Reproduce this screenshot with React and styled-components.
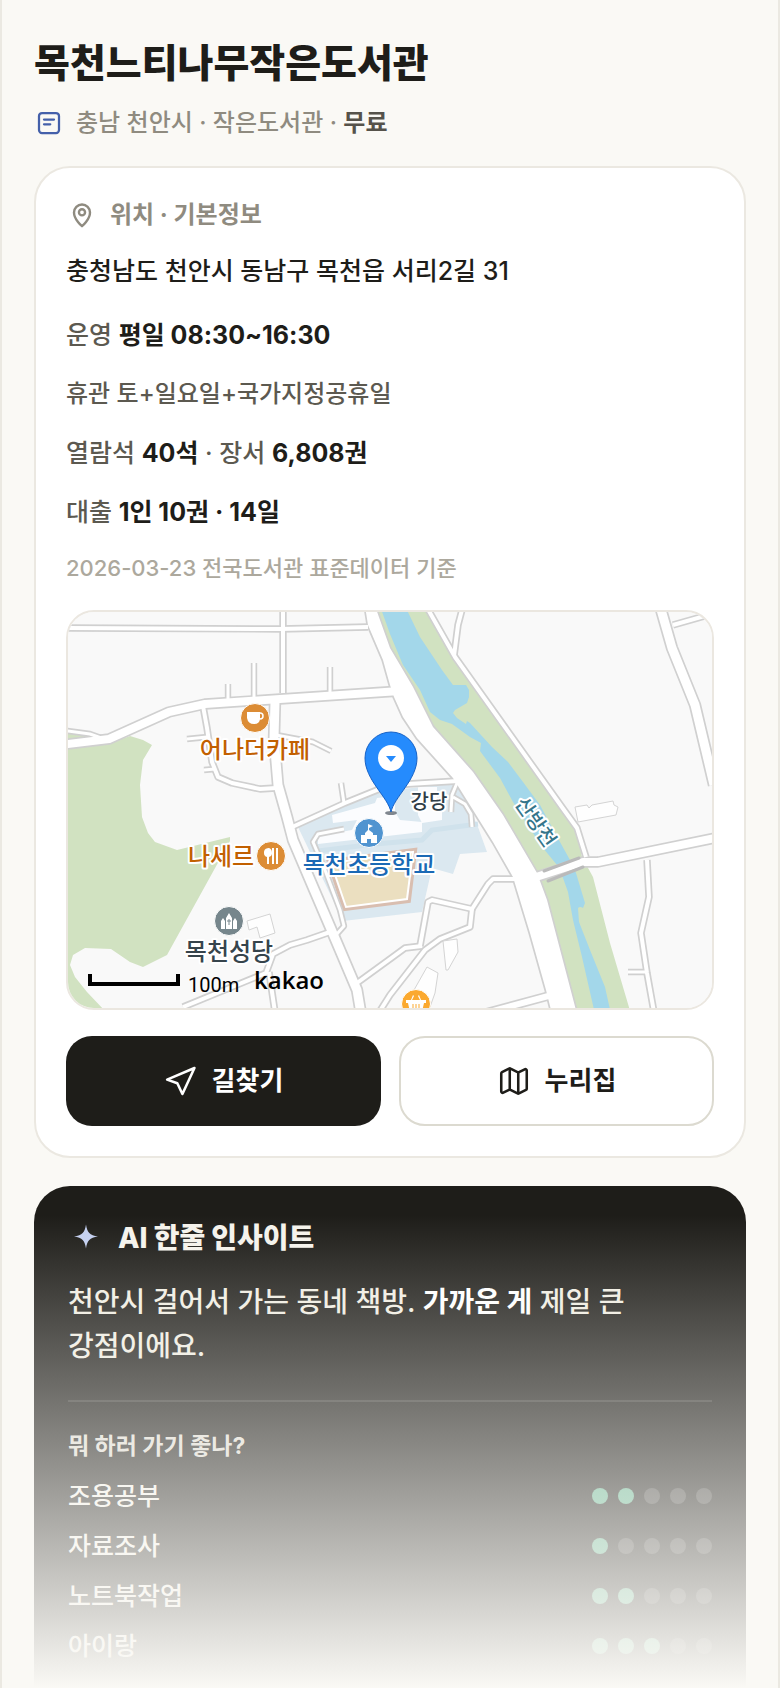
import styled, { createGlobalStyle, css } from "styled-components";
import { Map as MapIcon } from "lucide-react";

const GlobalStyle = createGlobalStyle`
  * {
    box-sizing: border-box;
  }

  body {
    margin: 0;
    background: #faf9f5;
    color: #1e1d19;
    font-family: Inter, "Noto Sans CJK KR", sans-serif;
  }

  h1, h2, h3, p, ul, dl, dd {
    margin: 0;
    padding: 0;
  }
`;

const Shell = styled.main`
  position: relative;
  display: flex;
  flex-direction: column;
  height: 100vh;
  overflow: hidden;
  padding: 36px 32px 0;
  border: 0 solid #ebe9e2;
  border-width: 0 2px;
`;

const Title = styled.h1`
  font-size: 39px;
  font-weight: 800;
  line-height: 54px;
`;

const Meta = styled.p`
  display: flex;
  align-items: center;
  gap: 12px;
  margin-top: 15px;
  font-size: 24px;
  font-weight: 500;
  line-height: 36px;
  color: #8f8b80;

  strong {
    font-weight: 600;
    color: #55524a;
  }
`;

const Card = styled.section`
  flex: none;
  margin-top: 25px;
  padding: 30px;
  border: 2px solid #ebe8e1;
  border-radius: 36px;
  background: #fff;
`;

const CardTitle = styled.h2`
  display: flex;
  align-items: center;
  gap: 12px;
  font-size: 24px;
  font-weight: 700;
  line-height: 34px;
  color: #8f8b80;
`;

const Address = styled.p`
  margin-top: 19px;
  font-size: 25px;
  font-weight: 500;
  line-height: 40px;
`;

const InfoList = styled.div`
  display: grid;
  gap: 23px;
  margin-top: 26px;
`;

const InfoRow = styled.p`
  font-size: ${(p) => (p.$plain ? 24 : 25)}px;
  font-weight: 500;
  line-height: 36px;
  color: #5c5950;

  strong {
    font-weight: 700;
    color: #1e1d19;
  }
`;

const Source = styled.p`
  margin-top: 22px;
  font-size: 22px;
  font-weight: 500;
  line-height: 32px;
  color: #aca89d;
`;

const MapFrame = styled.div`
  height: 400px;
  margin-top: 26px;
  border: 2px solid #ebe7e0;
  border-radius: 28px;
  overflow: hidden;
  background: #f9f9f9;

  svg {
    display: block;
    width: 100%;
    height: 100%;
  }
`;

const Label = styled.text`
  font-family: "Noto Sans CJK KR", sans-serif;
  font-size: ${(p) => (p.$small ? 20 : 24)}px;
  font-weight: 500;
  fill: ${(p) => p.$color};
  stroke: #fff;
  stroke-width: 4px;
  stroke-linejoin: round;
  paint-order: stroke;
  text-anchor: middle;
`;

const ScaleText = styled.text`
  font-family: Roboto, sans-serif;
  font-size: 20px;
`;

const Brand = styled.text`
  font-family: "Open Sans", sans-serif;
  font-size: 24px;
  font-weight: 600;
`;

const Actions = styled.div`
  display: grid;
  grid-template-columns: 1fr 1fr;
  gap: 18px;
  margin-top: 26px;
`;

const Action = styled.a`
  display: flex;
  align-items: center;
  justify-content: center;
  gap: 14px;
  height: 90px;
  border-radius: 26px;
  font-size: 26px;
  font-weight: 700;
  line-height: 34px;
  text-decoration: none;

  ${(p) =>
    p.$primary
      ? css`
          background: #1e1d19;
          color: #fff;
        `
      : css`
          background: #fff;
          color: #1e1d19;
          border: 2px solid #dcdad0;
        `}
`;

const Insight = styled.section`
  flex: 1 0 auto;
  margin-top: 28px;
  padding: 34px 34px 64px;
  border-radius: 36px;
  background: #1e1d19;
  color: #f5f3ec;
`;

const InsightTitle = styled.h2`
  display: flex;
  align-items: center;
  gap: 14px;
  font-size: 28px;
  font-weight: 800;
  line-height: 36px;
`;

const Quote = styled.p`
  margin-top: 24px;
  font-size: 28px;
  font-weight: 500;
  line-height: 44px;
  color: #f0ede2;
  word-break: keep-all;

  strong {
    font-weight: 700;
    color: #fff;
  }
`;

const Divider = styled.hr`
  height: 2px;
  margin: 32px 0 28px;
  border: 0;
  background: rgba(255, 255, 255, 0.12);
`;

const SubTitle = styled.h3`
  font-size: 23px;
  font-weight: 700;
  line-height: 32px;
  color: #dedbd2;
`;

const Scores = styled.dl`
  display: grid;
  gap: 14px;
  margin-top: 16px;
`;

const ScoreRow = styled.div`
  display: flex;
  align-items: center;
  justify-content: space-between;
  font-size: 25px;
  font-weight: 500;
  line-height: 36px;
`;

const Dots = styled.dd`
  display: flex;
  gap: 10px;
`;

const Dot = styled.span`
  width: 16px;
  height: 16px;
  border-radius: 50%;
  background: ${(p) => (p.$on ? "#62b28e" : "rgba(255, 255, 255, 0.18)")};
`;

const Fade = styled.div`
  position: absolute;
  left: 0;
  right: 0;
  bottom: 0;
  height: 28%;
  background: linear-gradient(rgba(250, 249, 245, 0), #faf9f5);
  pointer-events: none;
`;

const strokeProps = {
  fill: "none",
  stroke: "currentColor",
  strokeWidth: 1.8,
  strokeLinecap: "round",
  strokeLinejoin: "round",
  "aria-hidden": true,
};

const NoteIcon = () => (
  <svg width="30" height="30" viewBox="0 0 24 24" {...strokeProps} stroke="#4460aa">
    <rect x="4" y="4" width="16" height="16" rx="2.4" />
    <path d="M8 9.2h8M8 13h5" />
  </svg>
);

const PlaceIcon = () => (
  <svg width="32" height="32" viewBox="0 0 24 24" {...strokeProps}>
    <path d="M12 20.4s-6-5-6-10.3a6 6 0 0 1 12 0c0 5.3-6 10.3-6 10.3z" />
    <circle cx="12" cy="10" r="2.3" />
  </svg>
);

const RouteIcon = () => (
  <svg width="34" height="34" viewBox="0 0 24 24" {...strokeProps}>
    <path d="M21.5 2.8 2.2 11l7.2 2.6L13 21.2z" />
  </svg>
);

const SparkIcon = () => (
  <svg width="36" height="36" viewBox="0 0 24 24" fill="#c3cff0" aria-hidden="true">
    <path d="M12 3c.8 5.200 2.400 7.300 8 8-5.600.7-7.200 2.800-8 8-.8-5.200-2.400-7.300-8-8 5.600-.7 7.200-2.800 8-8z" />
  </svg>
);

// [points, width of the road surface]
const roads = [
  ["60,628 280,629 368,627", 4],
  ["283,606 283,693", 4],
  ["60,745 109,739 169,712 205,704 280,699 400,691", 8],
  ["60,730 90,734 104,739", 3],
  ["228,684 228,702", 3],
  ["254,663 254,700", 3],
  ["330,667 330,697", 3],
  ["203,706 207,728 212,762 218,777 232,783 260,789 276,788", 4],
  ["187,739 207,737", 3],
  ["204,770 215,769", 3],
  ["275,702 274,738 278,785 287,817 293,840 313,887 337,943 357,990 361,1014", 9],
  ["276,735 313,742 331,751", 3],
  ["290,828 345,803 382,788 408,784 458,781", 4],
  ["341,783 344,803", 3],
  ["451,812 452,795 457,783", 3],
  ["453,797 465,804 471,814 472,827", 3],
  ["344,829 318,834 313,842 325,870 340,910 344,926 336,935", 3],
  ["425,604 455,657 564,810 577,828 586,857", 4],
  ["463,606 458,625 454,656", 4],
  ["660,606 672,648 695,705 714,785", 9],
  ["673,625 712,614", 4],
  ["533,878 583,862 598,862 720,837", 8],
  ["647,860 649,897 641,933 647,973 654,1012", 4],
  ["628,972 647,972", 3],
  ["516,879 493,879 488,884 472,909 432,900 428,902 420,946", 4],
  ["472,909 470,927 440,939 425,950 390,995 378,1014", 4],
  ["422,946 405,948 390,959 357,983", 4],
  ["330,932 307,940 290,945 273,954 266,973 183,1007", 4],
  ["269,972 275,1012", 4],
  ["478,1015 552,995", 6],
];

const mainRoad =
  "365,606 368,625 383,660 390,685 394,697 403,717 417,738 453,778 473,810 493,842 513,877 530,933 546,990 552,1014 577,1014 547,900 537,873 503,815 473,772 433,727 413,687 390,648 375,606";

const buildings = [
  "247,921 270,914 275,933 260,938 257,927 249,930",
  "443,941 457,939 458,952 448,970 446,970",
  "427,967 438,973 435,993 430,1007 420,1007 414,990",
  "575,807 587,805 589,808 592,805 613,801 614,805 618,807 616,815 578,822",
];

const markers = [
  { x: 255, y: 718, fill: "#dc8c35" },
  { x: 271, y: 856, fill: "#dc8c35" },
  { x: 229, y: 921, fill: "#76868c" },
  { x: 369, y: 833, fill: "#5094d0" },
  { x: 416, y: 1004, fill: "#fba92f" },
];

const LocationMap = () => (
  <svg
    viewBox="68 612 644 396"
    preserveAspectRatio="xMidYMid slice"
    role="img"
    aria-label="목천느티나무작은도서관 지도"
  >
    <rect x="60" y="600" width="660" height="420" fill="#f9f9f9" />
    <g fill="#d1e2c1">
      <path d="M60 748 110 743 130 736 143 740 152 745 143 760 140 785 142 817 148 833 155 842 177 850 230 837V841L167 955 143 967 130 962 111 949 85 948 73 955 70 965 75 977 87 992 106 1012H60z" />
      <path d="M60 734H90L96 738 60 741z" />
      <path d="M372 606 390 648 413 687 433 727 473 772 503 815 537 873 547 900 577 1014H631L610 943 593 877 582 857 577 833 562 810 455 658 423 606z" />
    </g>
    <path
      fill="#a3d7ea"
      d="M380 606 390 634 403 665 420 690 430 712 440 720 452 724 470 737 481 743 480 751 500 778 513 802 533 833 543 848 557 865 563 878 568 892 573 920 582 957 595 1014H611L605 987 590 950 579 922 578 908Q580 906 583 908L585 903 576 873 570 860 560 842 540 805 523 782 508 762 492 747 470 723 467 721 466 724 457 718 453 713 455 710 467 703 469 697V690L466 685H453L442 670 420 637 405 606z"
    />
    <path
      fill="#dbe8f0"
      d="M298 827 375 792 458 783 478 827 487 852 460 854 453 874 432 868 422 912 343 921z"
    />
    <path
      d="M318 851 375 844 422 840 432 830 478 824"
      fill="none"
      stroke="#d0e2ec"
      strokeWidth="5"
    />
    <path
      fill="#fbfcfe"
      d="M332 815 375 803 377 798 395 796V812L400 820 422 822V832L318 844V836L352 830 357 820 333 823zM418 787H437V803H442V820L422 823 418 815z"
    />
    <path d="M330 862 414 851 408 900 345 908z" fill="#ebdfc0" stroke="#d9beb0" strokeWidth="6" />
    <path d="M331 863 413 852 407 899 346 907z" fill="#ebdfc0" stroke="#fff" strokeWidth="2" />

    <g fill="none" stroke="#d0d0d0" strokeLinejoin="round">
      {roads.map(([points, width]) => (
        <polyline key={points} points={points} strokeWidth={width + 3.4} />
      ))}
      <polygon points={mainRoad} strokeWidth="3.4" />
    </g>
    <g fill="none" stroke="#fff" strokeLinejoin="round">
      {roads.map(([points, width]) => (
        <polyline key={points} points={points} strokeWidth={width} />
      ))}
      <polygon points={mainRoad} fill="#fff" stroke="none" />
    </g>
    <g fill="#fefefe" stroke="#d4d4d4">
      {buildings.map((points) => (
        <polygon key={points} points={points} />
      ))}
    </g>
    <path
      d="M544 871 579 858M548 881 583 867"
      stroke="#bababa"
      strokeWidth="3"
      strokeLinecap="round"
    />

    {markers.map(({ x, y, fill }) => (
      <circle key={`${x}-${y}`} cx={x} cy={y} r="14.5" fill={fill} stroke="#fff" />
    ))}
    <g fill="#fff">
      <path d="M247 712H260V718Q260 724 254 724T247 718z" />
      <circle cx="260" cy="716" r="3" fill="none" stroke="#fff" strokeWidth="1.5" />
      <path d="M264 853a4 4.500 0 1 1 5 4V864H267V857a4 4 0 0 1-3-4zM272 848h2v16h-2zM276 848h2v16h-2z" />
      <path d="M221 929V921L223 918 225 921V929zM226 929V918L229 913 232 918V929zM233 929V921L235 918 237 921V929z" />
      <path d="M368 824 373 826 369 828V830L373 833V835H377V843H371V839H367V843H361V835H365V833L368 830z" />
      <path d="M406 1000H411L413 995 414 996 412 1000H420L418 996 419 995 421 1000H426V1003H424L422 1012H410L408 1003H406z" />
    </g>
    <path d="M229 919v6M227 921h4" stroke="#76868c" />
    <path d="M413 1004v8M416 1004v8M419 1004v8" stroke="#fba92f" />

    <Label x="255" y="758" $color="#c26000">어나더카페</Label>
    <Label x="221" y="865" $color="#c26000">나세르</Label>
    <Label x="229" y="960" $color="#36444c">목천성당</Label>
    <Label x="369" y="873" $color="#1a69b5">목천초등학교</Label>
    <Label x="429" y="809" $small $color="#2f3d47">강당</Label>
    <Label $small $color="#34758b" transform="translate(530 826) rotate(55)">
      산방천
    </Label>

    <ellipse cx="391" cy="813" rx="6" ry="2" fill="#4c5560" opacity="0.7" />
    <path
      d="M391 812C388 797 365 780 365 758a26 26 0 0 1 52 0C417 780 394 797 391 812z"
      fill="#258bfd"
      stroke="#1762c6"
    />
    <circle cx="391" cy="758" r="13" fill="#fff" />
    <path d="M386 756h10l-5 6z" fill="#258bfd" />

    <path d="M90 974V984H178V974" fill="none" stroke="#000" strokeWidth="4" />
    <ScaleText x="188" y="992">100m</ScaleText>
    <Brand x="254" y="989">kakao</Brand>
  </svg>
);

const scores = [
  { label: "조용공부", value: 2 },
  { label: "자료조사", value: 1 },
  { label: "노트북작업", value: 2 },
  { label: "아이랑", value: 3 },
];

const App = () => {
  return (
    <>
      <GlobalStyle />
      <Shell>
        <Title>목천느티나무작은도서관</Title>
        <Meta>
          <NoteIcon />
          <span>
            충남 천안시 · 작은도서관 · <strong>무료</strong>
          </span>
        </Meta>

        {/* Location and basic info */}
        <Card>
          <CardTitle>
            <PlaceIcon />
            위치 · 기본정보
          </CardTitle>
          <Address>충청남도 천안시 동남구 목천읍 서리2길 31</Address>
          <InfoList>
            <InfoRow>
              운영 <strong>평일 08:30~16:30</strong>
            </InfoRow>
            <InfoRow $plain>휴관 토+일요일+국가지정공휴일</InfoRow>
            <InfoRow>
              열람석 <strong>40석</strong> · 장서 <strong>6,808권</strong>
            </InfoRow>
            <InfoRow>
              대출 <strong>1인 10권 · 14일</strong>
            </InfoRow>
          </InfoList>
          <Source>2026-03-23 전국도서관 표준데이터 기준</Source>
          <MapFrame>
            <LocationMap />
          </MapFrame>
          <Actions>
            <Action href="#route" $primary>
              <RouteIcon />
              길찾기
            </Action>
            <Action href="#homepage">
              <MapIcon size={34} strokeWidth={1.8} aria-hidden="true" />
              누리집
            </Action>
          </Actions>
        </Card>

        {/* AI insight */}
        <Insight>
          <InsightTitle>
            <SparkIcon />
            AI 한줄 인사이트
          </InsightTitle>
          <Quote>
            천안시 걸어서 가는 동네 책방. <strong>가까운 게</strong> 제일 큰
            <br />
            강점이에요.
          </Quote>
          <Divider />
          <SubTitle>뭐 하러 가기 좋나?</SubTitle>
          <Scores>
            {scores.map(({ label, value }) => (
              <ScoreRow key={label}>
                <dt>{label}</dt>
                <Dots aria-label={`5점 중 ${value}점`}>
                  {[1, 2, 3, 4, 5].map((n) => (
                    <Dot key={n} $on={n <= value} />
                  ))}
                </Dots>
              </ScoreRow>
            ))}
          </Scores>
        </Insight>
        <Fade />
      </Shell>
    </>
  );
};

export default App;
